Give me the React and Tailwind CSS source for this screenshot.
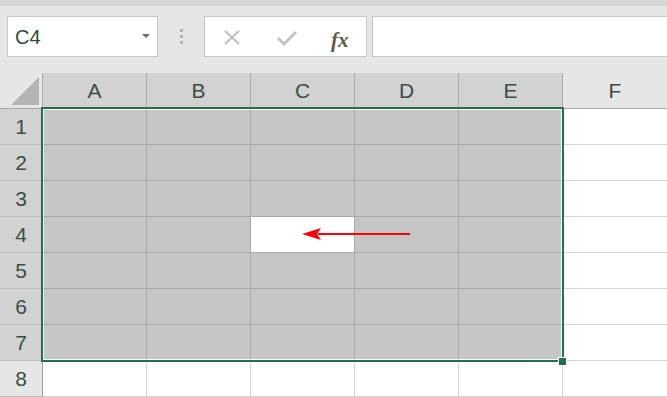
import React from "react";

const cols = ["A", "B", "C", "D", "E"];
const rows = [1, 2, 3, 4, 5, 6, 7];

export default function App() {
  return (
    <div
      className="relative w-[667px] h-[397px] overflow-hidden bg-[#e6e6e6] text-[#3a4d46]"
      style={{ fontFamily: '"Liberation Sans", Arial, sans-serif' }}
    >
      {/* ===== TOP STRIP ===== */}
      <div className="h-[6px] bg-[#d5d5d5]" />

      {/* ===== FORMULA BAR ===== */}
      <div className="flex items-stretch h-[41px] mt-[10px] pl-[7px]">
        <div className="w-[151px] bg-white border border-[#c6c6c6] flex items-center justify-between pl-[7px] pr-[7px]">
          <span className="text-[20px] leading-none text-[#2f4a3f]">C4</span>
          <svg width="8" height="5" viewBox="0 0 8 5">
            <path d="M0 0 L8 0 L4 4 Z" fill="#6b6b6b" />
          </svg>
        </div>
        <div className="w-[46px] flex flex-col items-center justify-center gap-[3px]">
          <div className="w-[3px] h-[3px] bg-[#b3b3b3]" />
          <div className="w-[3px] h-[3px] bg-[#b3b3b3]" />
          <div className="w-[3px] h-[3px] bg-[#b3b3b3]" />
        </div>
        <div className="w-[163px] bg-white border border-[#c6c6c6] relative">
          <svg className="absolute left-[19px] top-[13px]" width="16" height="15" viewBox="0 0 16 15">
            <path d="M1 1 L15 14 M15 1 L1 14" stroke="#bdbdbd" strokeWidth="1.8" fill="none" />
          </svg>
          <svg className="absolute left-[72px] top-[14px]" width="20" height="15" viewBox="0 0 20 15">
            <path d="M1 7 L7 13 L19 1" stroke="#c4c4c4" strokeWidth="3" fill="none" />
          </svg>
          <span
            className="absolute left-[126px] top-[8px] text-[21px] italic font-bold text-[#5f5a4a]"
            style={{ fontFamily: '"Liberation Serif", "Times New Roman", serif' }}
          >
            fx
          </span>
        </div>
        <div className="flex-1 ml-[5px] -mr-[4px] bg-white border border-[#c6c6c6]" />
      </div>

      {/* ===== SHEET GRID ===== */}
      <div className="mt-[16px] grid grid-cols-[43px_repeat(5,104px)_105px] grid-rows-[36px_repeat(8,36px)]">
        {/* corner */}
        <div className="bg-[#e6e6e6] border-r border-b border-[#a8a8a8] flex items-end justify-end pr-[3px] pb-[3px]">
          <svg width="28" height="28" viewBox="0 0 28 28">
            <path d="M28 0 L28 28 L0 28 Z" fill="#b4b4b4" />
          </svg>
        </div>
        {cols.map((c) => (
          <div
            key={c}
            className="bg-[#d2d2d2] border-r border-b border-[#ababab] flex items-center justify-center text-[21px]"
          >
            {c}
          </div>
        ))}
        <div className="bg-[#e6e6e6] border-r border-b border-[#ababab] flex items-center justify-center text-[21px]">
          F
        </div>

        {rows.map((r) => (
          <React.Fragment key={r}>
            <div className="bg-[#d2d2d2] border-r border-[#a0a0a0] border-b border-b-[#bdbdbd] flex items-center justify-center text-[21px]">
              {r}
            </div>
            {cols.map((c) =>
              r === 4 && c === "C" ? (
                <div key={c} className="bg-white border-r border-b border-[#a9a9a9]" />
              ) : (
                <div key={c} className="bg-[#c6c6c6] border-r border-b border-[#a9a9a9]" />
              )
            )}
            <div className="bg-white border-r border-b border-[#d4d4d4]" />
          </React.Fragment>
        ))}

        <div className="bg-[#e6e6e6] border-r border-[#a0a0a0] border-b border-b-[#bdbdbd] flex items-center justify-center text-[21px]">
          8
        </div>
        {cols.map((c) => (
          <div key={c} className="bg-white border-r border-b border-[#d4d4d4]" />
        ))}
        <div className="bg-white border-r border-b border-[#d4d4d4]" />
      </div>

      {/* ===== SELECTION OUTLINE ===== */}
      <div className="absolute left-[41px] top-[107px] w-[523px] h-[255px] border-2 border-[#217346] shadow-[inset_0_0_0_1px_#ffffff]" />
      <div className="absolute left-[559px] top-[358px] w-[7px] h-[7px] bg-[#217346] outline outline-1 outline-white" />

      {/* ===== ARROW ===== */}
      <svg className="absolute left-[300px] top-[227px]" width="114" height="15" viewBox="0 0 114 15">
        <path d="M110 7 L18 7" stroke="#ff0000" strokeWidth="2.2" fill="none" />
        <path d="M2 7 L21 1 L17 7 L21 13 Z" fill="#ff0000" />
      </svg>
    </div>
  );
}
